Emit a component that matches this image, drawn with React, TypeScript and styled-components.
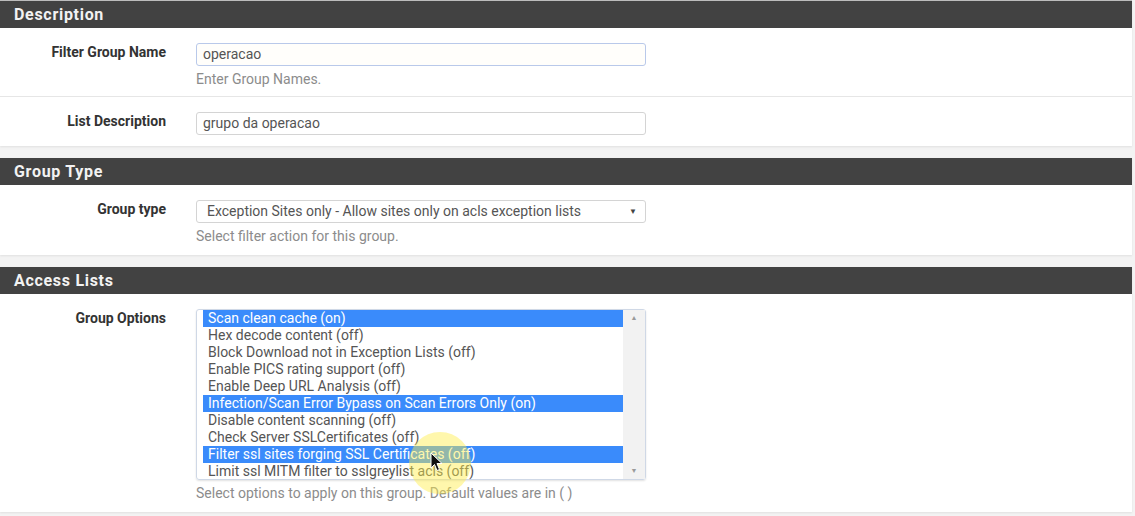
import { styled, createGlobalStyle } from "styled-components";

const GlobalStyle = createGlobalStyle`
	html, body {
		margin: 0;
		padding: 0;
		background: #f3f3f3;
		font-family: Roboto, "Liberation Sans", Arial, sans-serif;
	}
`;

const Page = styled.div`
	width: 1132px;
	border-top: 1px solid #bdbdbd;
`;

const Panel = styled.section`
	background: #fff;
	margin-bottom: 12px;
	box-shadow: 0 1px 2px rgba(0, 0, 0, 0.08);
`;

const PanelHeading = styled.h2`
	margin: 0;
	height: 27px;
	line-height: 27px;
	padding: 0 14px;
	background: #424242;
	color: #f2f2f2;
	font-size: 16px;
	font-weight: 700;
	letter-spacing: 0.7px;
`;

const Row = styled.div<{ $last?: boolean }>`
	display: flex;
	padding: 15px 0 ${(p) => (p.$last ? "11px" : "9px")};
	border-bottom: ${(p) => (p.$last ? "none" : "1px solid #e6e6e6")};
`;

const Label = styled.div`
	width: 166px;
	flex-shrink: 0;
	text-align: right;
	font-size: 14px;
	font-weight: 700;
	color: #333;
	padding-top: 1px;
	margin-right: 30px;
`;

const Field = styled.div`
	width: 450px;
	display: flex;
	flex-direction: column;
`;

const TextInput = styled.div<{ $focus?: boolean }>`
	height: 23px;
	box-sizing: border-box;
	border: 1px solid ${(p) => (p.$focus ? "#b9c9ea" : "#d4d4d4")};
	border-radius: 3px;
	padding: 0 6px;
	font-size: 14px;
	line-height: 21px;
	color: #555;
	background: ${(p) => (p.$focus ? "#fffefb" : "#fff")};
`;

const SelectBox = styled(TextInput)`
	display: flex;
	justify-content: space-between;
	align-items: center;
	padding: 0 8px 0 10px;
`;

const Caret = styled.span`
	font-size: 8px;
	color: #444;
`;

const Help = styled.div`
	margin-top: 6px;
	font-size: 14px;
	line-height: 15px;
	color: #8c8c8c;
`;

const ListBox = styled.div`
	position: relative;
	height: 171px;
	box-sizing: border-box;
	border: 1px solid #cfd8e6;
	border-radius: 3px;
	display: flex;
	padding-left: 6px;
	box-shadow: 0 1px 2px rgba(0, 0, 0, 0.12);
`;

const Options = styled.div`
	flex: 1;
`;

const Option = styled.div<{ $selected?: boolean }>`
	height: 17px;
	line-height: 17px;
	padding-left: 5px;
	font-size: 14px;
	white-space: nowrap;
	color: ${(p) => (p.$selected ? "#fff" : "#555")};
	background: ${(p) => (p.$selected ? "#3a8bfb" : "transparent")};
`;

const Scrollbar = styled.div`
	width: 22px;
	background: #f2f2f2;
	display: flex;
	flex-direction: column;
	justify-content: space-between;
	align-items: center;
	padding: 4px 0;
	font-size: 7px;
	color: #9a9a9a;
`;

const Highlight = styled.div`
	position: absolute;
	left: 212px;
	top: 122px;
	width: 62px;
	height: 62px;
	border-radius: 50%;
	background: rgba(255, 238, 70, 0.45);
	pointer-events: none;
`;

const Pointer = styled.svg`
	position: absolute;
	left: 233px;
	top: 142px;
`;

const options: [string, boolean][] = [
	["Scan clean cache (on)", true],
	["Hex decode content (off)", false],
	["Block Download not in Exception Lists (off)", false],
	["Enable PICS rating support (off)", false],
	["Enable Deep URL Analysis (off)", false],
	["Infection/Scan Error Bypass on Scan Errors Only (on)", true],
	["Disable content scanning (off)", false],
	["Check Server SSLCertificates (off)", false],
	["Filter ssl sites forging SSL Certificates (off)", true],
	["Limit ssl MITM filter to sslgreylist acls (off)", false],
];

const App = () => {
	return (
		<>
			<GlobalStyle />
			<Page>
				<Panel>
					<PanelHeading>Description</PanelHeading>
					<Row>
						<Label>Filter Group Name</Label>
						<Field>
							<TextInput $focus>operacao</TextInput>
							<Help>Enter Group Names.</Help>
						</Field>
					</Row>
					<Row $last>
						<Label>List Description</Label>
						<Field>
							<TextInput>grupo da operacao</TextInput>
						</Field>
					</Row>
				</Panel>
				<Panel>
					<PanelHeading>Group Type</PanelHeading>
					<Row $last>
						<Label>Group type</Label>
						<Field>
							<SelectBox>
								<span>Exception Sites only - Allow sites only on acls exception lists</span>
								<Caret>▼</Caret>
							</SelectBox>
							<Help>Select filter action for this group.</Help>
						</Field>
					</Row>
				</Panel>
				<Panel>
					<PanelHeading>Access Lists</PanelHeading>
					<Row $last>
						<Label>Group Options</Label>
						<Field>
							<ListBox>
								<Options>
									{options.map(([text, sel]) => (
										<Option key={text} $selected={sel}>
											{text}
										</Option>
									))}
								</Options>
								<Scrollbar>
									<span>▲</span>
									<span>▼</span>
								</Scrollbar>
								<Highlight />
								<Pointer width="14" height="20" viewBox="0 0 14 20">
									<path
										d="M1 1 L1 16 L4.5 12.5 L7 18.5 L9.5 17.5 L7 11.5 L12 11.5 Z"
										fill="#111"
										stroke="#fff"
										strokeWidth="1"
									/>
								</Pointer>
							</ListBox>
							<Help>Select options to apply on this group. Default values are in ( )</Help>
						</Field>
					</Row>
				</Panel>
			</Page>
		</>
	);
};

export default App;
